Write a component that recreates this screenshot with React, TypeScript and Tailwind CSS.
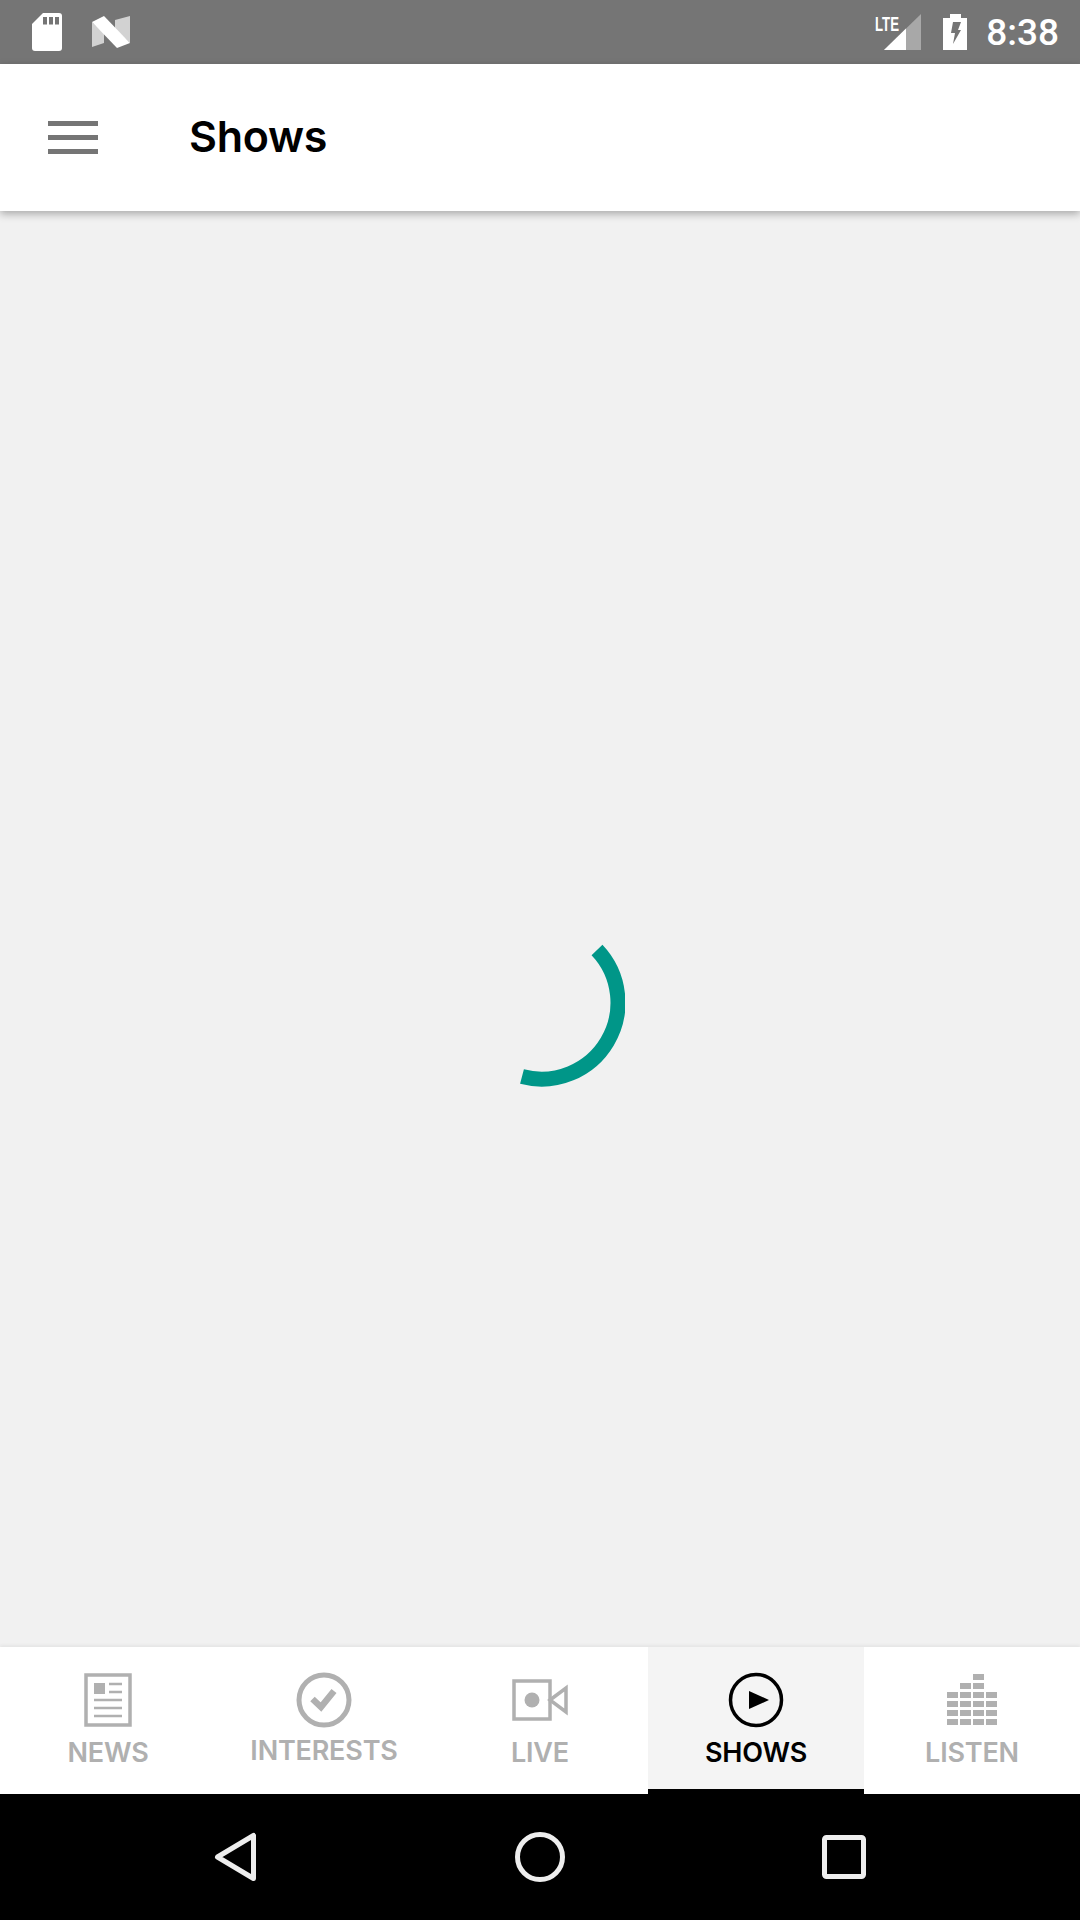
import React from "react";

const gray = "#b0b0b0";
const font = "font-['Inter','Liberation_Sans',sans-serif]";

function SdIcon() {
  return (
    <svg width="30" height="38" viewBox="0 0 30 38" className="ml-[32px]">
      <path d="M11 0H27a3 3 0 0 1 3 3V35a3 3 0 0 1-3 3H3a3 3 0 0 1-3-3V11Z" fill="#fff" />
      <rect x="11" y="4" width="4" height="7.500" fill="#757575" />
      <rect x="17" y="4" width="4" height="7.500" fill="#757575" />
      <rect x="23" y="4" width="4" height="7.500" fill="#757575" />
    </svg>
  );
}

function NIcon() {
  return (
    <svg width="38" height="32" viewBox="0 0 38 32" className="ml-[30px]">
      <path d="M0 6 12 17V27L0 31Z" fill="#d2d2d2" />
      <path d="M23 4 38 0V27L23 13Z" fill="#d2d2d2" />
      <path d="M0 6 12 0 38 27 25 32Z" fill="#fff" />
    </svg>
  );
}

function NavTab({ label, active, children, lift }: { label: string; active?: boolean; lift?: boolean; children: React.ReactNode }) {
  return (
    <div className={active ? "flex-1 flex flex-col items-center bg-[#f4f4f4] border-b-[5px] border-black" : "flex-1 flex flex-col items-center"}>
      <div className="h-[60px] mt-[23px] flex items-center justify-center">{children}</div>
      <span
        className={
          (active ? "text-black " : "text-[#b0b0b0] ") +
          (lift ? "mt-[4px] " : "mt-[6px] ") +
          "text-[27px] leading-[34px] font-semibold tracking-[-0.2px] " +
          font
        }
      >
        {label}
      </span>
    </div>
  );
}

export default function App() {
  return (
    <div className={"w-[1080px] h-[1920px] flex flex-col bg-[#f1f1f1] overflow-hidden " + font}>
      <div className="h-[64px] shrink-0 bg-[#757575] flex items-center">
        <SdIcon />
        <NIcon />
        <div className="flex-1" />
        <div className="relative w-[47px] h-[36px] mr-[22px]">
          <svg width="47" height="36" viewBox="0 0 47 36" className="absolute inset-0">
            <path d="M10 36 47 0V36Z" fill="#a8a8a8" />
            <path d="M10 36 32 14.500V36Z" fill="#fff" />
          </svg>
          <span className="absolute left-[1px] top-[1px] text-[20px] leading-[18px] font-bold text-white origin-left scale-x-[0.66] font-['Liberation_Sans',sans-serif]">LTE</span>
        </div>
        <svg width="24" height="36" viewBox="0 0 24 36" className="mr-[19px]">
          <path d="M7 0H18V4H24V36H0V4H7Z" fill="#fff" />
          <path d="M10 8H18L15 16H18L10 30 12 19H8Z" fill="#757575" />
        </svg>
        <span className="text-[37px] leading-none font-medium text-white mr-[21px] font-['Roboto',sans-serif]">8:38</span>
      </div>

      <header className="h-[147px] shrink-0 bg-white flex items-center shadow-[0_3px_8px_rgba(0,0,0,0.3)] relative z-10">
        <div className="ml-[48px] w-[50px] flex flex-col gap-[9px]">
          <div className="h-[5px] bg-[#757575]" />
          <div className="h-[5px] bg-[#757575]" />
          <div className="h-[5px] bg-[#757575]" />
        </div>
        <h1 className="ml-[91px] mb-[2px] text-[43px] leading-none font-semibold text-black tracking-[-0.3px]">Shows</h1>
      </header>

      <main className="flex-1 flex items-center justify-center bg-[#f1f1f1] pt-[146px]">
        <svg width="170" height="170" viewBox="-85 -85 170 170">
          <path d="M57 -52A76.500 76.500 0 0 1 -18 74.600" fill="none" stroke="#009688" strokeWidth="15" />
        </svg>
      </main>

      <nav className="h-[147px] shrink-0 bg-white flex relative shadow-[0_-2px_3px_rgba(0,0,0,0.05)]">
        <NavTab label="NEWS">
          <svg width="48" height="54" viewBox="0 0 48 54" fill="none">
            <rect x="2" y="2" width="44" height="50" stroke={gray} strokeWidth="3.500" />
            <rect x="10" y="10" width="11" height="11" fill={gray} />
            <path d="M25 11H38M25 19H38M10 27H38M10 35H38M10 43H38" stroke={gray} strokeWidth="2.500" />
          </svg>
        </NavTab>
        <NavTab label="INTERESTS" lift>
          <svg width="56" height="56" viewBox="0 0 56 56" fill="none">
            <circle cx="28" cy="28" r="25" stroke={gray} strokeWidth="5" />
            <path d="M16.500 27 25 35 38 19" stroke={gray} strokeWidth="6.500" />
          </svg>
        </NavTab>
        <NavTab label="LIVE">
          <svg width="56" height="42" viewBox="0 0 56 42" fill="none">
            <rect x="2" y="2" width="36" height="38" stroke={gray} strokeWidth="3.500" />
            <circle cx="20" cy="21" r="7.500" fill={gray} />
            <path d="M38 21 54 9V33Z" stroke={gray} strokeWidth="3.500" />
          </svg>
        </NavTab>
        <NavTab label="SHOWS" active>
          <svg width="56" height="56" viewBox="0 0 56 56" fill="none">
            <circle cx="28" cy="28" r="25.500" stroke="#000" strokeWidth="3.500" />
            <path d="M21 19 41 28 21 37Z" fill="#000" />
          </svg>
        </NavTab>
        <NavTab label="LISTEN">
          <svg width="50" height="52" viewBox="0 0 50 52" fill={gray}>
            <rect x="26" y="0" width="11" height="6" />
            <rect x="13" y="9" width="11" height="6" />
            <rect x="26" y="9" width="11" height="6" />
            {[18, 27, 36, 45].map((y) => (
              <g key={y}>
                <rect x="0" y={y} width="11" height="6" />
                <rect x="13" y={y} width="11" height="6" />
                <rect x="26" y={y} width="11" height="6" />
                <rect x="39" y={y} width="11" height="6" />
              </g>
            ))}
          </svg>
        </NavTab>
      </nav>

      <div className="h-[126px] shrink-0 bg-black flex items-center justify-center">
        <div className="w-[304px] flex justify-center">
          <svg width="44" height="50" viewBox="0 0 44 50" fill="none">
            <path d="M3.500 25 39.500 3.500V46.500Z" stroke="#eeeeee" strokeWidth="5" strokeLinejoin="round" />
          </svg>
        </div>
        <div className="w-[304px] flex justify-center">
          <svg width="50" height="50" viewBox="0 0 50 50" fill="none">
            <circle cx="25" cy="25" r="22.500" stroke="#eeeeee" strokeWidth="5" />
          </svg>
        </div>
        <div className="w-[304px] flex justify-center">
          <svg width="44" height="44" viewBox="0 0 44 44" fill="none">
            <rect x="2.500" y="2.500" width="39" height="39" rx="2" stroke="#eeeeee" strokeWidth="5" />
          </svg>
        </div>
      </div>
    </div>
  );
}
